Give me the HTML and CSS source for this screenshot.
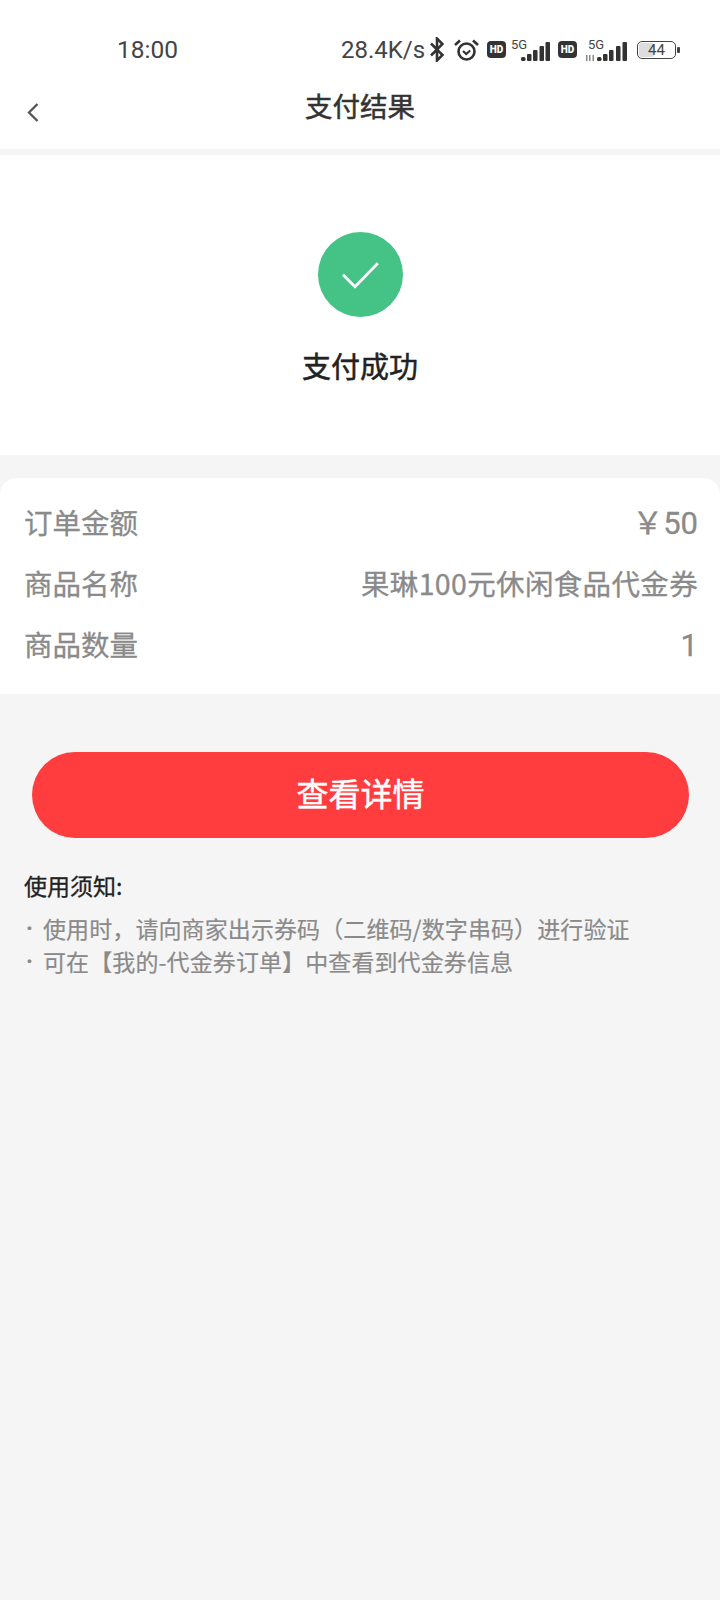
FILE: index.html
```html
<!DOCTYPE html>
<html lang="zh">
<head>
<meta charset="utf-8">
<title>支付结果</title>
<link rel="stylesheet" href="styles.css">
</head>
<body>
<header class="top">
  <div class="status">
    <span class="time">18:00</span>
    <div class="status-right">
      <span class="speed">28.4K/s</span>
      <svg class="ic-bt" width="14" height="25" viewBox="0 0 14 25" fill="none" stroke="#333" stroke-width="2.600"><path d="M1 6.500l11.500 11.500L7 23.500V1.500l5.500 5.500L1 18.500"/></svg>
      <svg class="ic-alarm" width="25" height="22" viewBox="0 0 25 22" fill="none" stroke="#333"><circle cx="12.500" cy="12.500" r="8" stroke-width="2.600"/><path d="M9 12l3.200 3 4-3.500" stroke-width="2.200"/><path d="M1 6l5-4.500M24 6l-5-4.500" stroke-width="2.600"/></svg>
      <span class="hd">HD</span>
      <span class="signal">
        <span class="g5">5G</span>
        <svg class="bars" width="29" height="19" viewBox="0 0 29 19" fill="#333"><rect x="0" y="15" width="4.500" height="4" rx="1.500"/><rect x="6" y="12" width="4.500" height="7" rx="1"/><rect x="12" y="8" width="4.500" height="11" rx="1"/><rect x="18.500" y="4" width="4.500" height="15" rx="1"/><rect x="24.500" y="0" width="4.500" height="19" rx="1"/></svg>
      </span>
      <span class="hd hd2">HD</span>
      <span class="signal signal2">
        <span class="g5">5G</span>
        <svg class="bars" width="41" height="19" viewBox="0 0 41 19" fill="#333"><path d="M0 13h1.500v6H0zM3 13h1.500v6H3zM6.500 13H8v6H6.500z" fill="#888"/><rect x="11" y="15" width="4.500" height="4" rx="1.500"/><rect x="17" y="12" width="4.500" height="7" rx="1"/><rect x="23" y="8" width="4.500" height="11" rx="1"/><rect x="30" y="4" width="4.500" height="15" rx="1"/><rect x="36.500" y="0" width="4.500" height="19" rx="1"/></svg>
      </span>
      <span class="battery"><span class="level"></span><span class="pct">44</span></span>
      <span class="nub"></span>
    </div>
  </div>
  <div class="nav">
    <svg class="back" width="12" height="19" viewBox="0 0 12 19" fill="none" stroke="#555" stroke-width="2.300"><path d="M10.500 1L2 9.500l8.500 8.500"/></svg>
    <h1 class="title">支付结果</h1>
  </div>
</header>

<section class="result">
  <div class="tick">
    <svg width="40" height="30" viewBox="0 0 40 30" fill="none" stroke="#fff" stroke-width="2.800"><path d="M3 14.800L15 26.800 37.800 3.200"/></svg>
  </div>
  <p class="result-text">支付成功</p>
</section>

<section class="card">
  <div class="row"><span>订单金额</span><span class="num">￥50</span></div>
  <div class="row"><span>商品名称</span><span class="name">果琳100元休闲食品代金券</span></div>
  <div class="row"><span>商品数量</span><span class="num">1</span></div>
</section>

<button class="cta">查看详情</button>

<section class="notes">
  <h2 class="notes-title">使用须知:</h2>
  <ul class="notes-list">
    <li>使用时，请向商家出示券码（二维码/数字串码）进行验证</li>
    <li>可在【我的-代金券订单】中查看到代金券信息</li>
  </ul>
</section>
</body>
</html>
```

FILE: styles.css
```css
* { box-sizing: border-box; }
html, body { margin: 0; padding: 0; }
body {
  width: 720px;
  min-height: 1600px;
  background: #f5f5f6;
  font-family: "Noto Sans CJK SC", Roboto, sans-serif;
  overflow: hidden;
}
.top { background: #fff; height: 149px; }
.status {
  height: 84px;
  padding: 15px 0 0 117px;
  display: flex;
  align-items: center;
  font-family: Roboto, sans-serif;
  color: #444;
}
.time { font-size: 24.500px; width: 224px; }
.status-right { display: flex; align-items: center; }
.speed { font-size: 24px; width: 89px; }
.ic-bt { margin-left: 0; }
.ic-alarm { margin-left: 10px; }
.hd {
  margin-left: 8px;
  width: 19px;
  height: 17px;
  border-radius: 4px;
  background: #333;
  color: #fff;
  font-size: 10px;
  font-weight: 900;
  line-height: 17px;
  text-align: center;
}
.signal { position: relative; margin-left: 5px; width: 39px; height: 22px; }
.signal2 { width: 41px; margin-left: 9px; }
.bars { position: absolute; right: 0; bottom: 0; }
.g5 { position: absolute; top: -2px; left: 0; font-size: 13px; line-height: 15px; color: #444; }
.signal2 .g5 { left: 2px; }
.battery {
  position: relative;
  margin-left: 10px;
  width: 39px;
  height: 18px;
  border: 1.500px solid #444;
  border-radius: 5px;
  display: block;
}
.level { position: absolute; left: 1px; top: 1px; bottom: 1px; width: 15px; background: #ddd; border-radius: 2px; }
.pct { position: absolute; inset: 0; text-align: center; font-size: 15px; line-height: 16px; color: #444; }
.nub { margin-left: 1px; width: 3px; height: 6px; background: #444; border-radius: 1px; }
.nav { position: relative; height: 65px; display: flex; justify-content: center; align-items: center; padding-bottom: 24px; }
.back { position: absolute; left: 27px; top: 19px; }
.title { margin: 0; font-size: 27.500px; font-weight: 400; -webkit-text-stroke: 0.500px #333; color: #333; line-height: 40px; }

.result {
  margin-top: 6px;
  height: 300px;
  background: #fff;
  display: flex;
  flex-direction: column;
  align-items: center;
  padding-top: 77px;
}
.tick {
  width: 85px;
  height: 85px;
  border-radius: 50%;
  background: #45c285;
  display: flex;
  align-items: center;
  justify-content: center;
}
.result-text { margin: 28px 0 0; font-size: 29px; font-weight: 400; -webkit-text-stroke: 0.500px #222; line-height: 40px; color: #222; }

.card {
  margin-top: 23px;
  height: 216px;
  background: #fff;
  border-radius: 16px 16px 0 0;
  padding: 13px 22px 0 24px;
}
.row {
  height: 61px;
  display: flex;
  justify-content: space-between;
  align-items: baseline;
  line-height: 61px;
  font-size: 28.500px;
  color: #8a8a8a;
  -webkit-text-stroke: 0.300px #8a8a8a;
}
.num { font-family: Roboto, "Noto Sans CJK SC", sans-serif; font-size: 31px; }
.name { letter-spacing: 0.350px; }

.cta {
  display: block;
  margin: 58px 0 0 32px;
  width: 657px;
  height: 86px;
  padding: 0 0 6px;
  border: 0;
  border-radius: 43px;
  background: #ff3d3f;
  color: #fff;
  font-family: inherit;
  font-size: 32px;
  font-weight: 400;
  -webkit-text-stroke: 0.500px #fff;
}

.notes { padding: 29px 24px 0; }
.notes-title { margin: 0; font-size: 23px; font-weight: 400; -webkit-text-stroke: 0.300px #222; line-height: 36px; color: #222; }
.notes-list { margin: 9px 0 0; padding: 0; list-style: none; }
.notes-list li { position: relative; padding-left: 19px; font-size: 23px; letter-spacing: 0.100px; line-height: 33px; color: #8a8a8a; -webkit-text-stroke: 0.200px #8a8a8a; }
.notes-list li::before { content: "·"; position: absolute; left: 2px; top: 0; font-family: Roboto, sans-serif; font-weight: 700; }
```
